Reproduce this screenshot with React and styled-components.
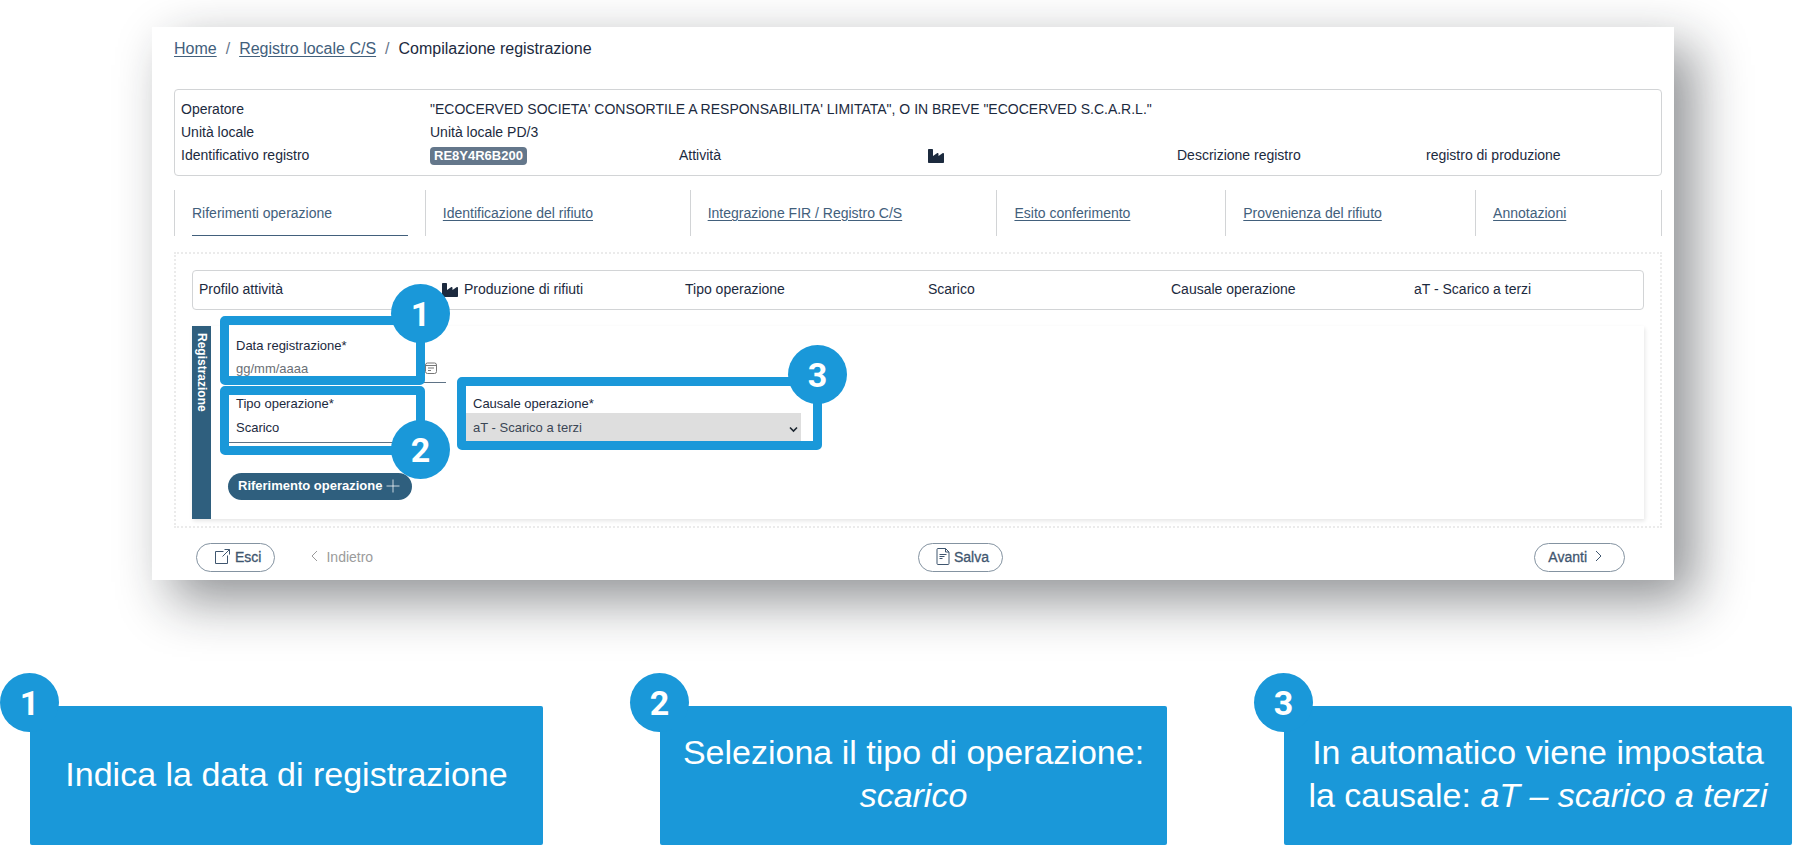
import React from "react";
import styled, { createGlobalStyle, css } from "styled-components";
import { FaIndustry } from "react-icons/fa";

const ink = "#1c2a3e";
const link = "#42607c";
const petrol = "#2f5f7e";
const accent = "#1a98d9";
const line = "#d2d4d6";

const GlobalStyle = createGlobalStyle`
  *, *::before, *::after { box-sizing: border-box; }
  body {
    margin: 0;
    background: #fff;
    color: ${ink};
    font-family: "Liberation Sans", Arial, Helvetica, sans-serif;
    font-size: 14px;
  }
  button, input, select { font: inherit; color: inherit; }
`;

const Page = styled.div`
  padding: 27px 0 19px;
  overflow-x: hidden;
`;

const Card = styled.main`
  margin: 0 136px 0 152px;
  padding: 12px 12px 8px 22px;
  background: #fff;
  box-shadow: 20px 20px 50px rgba(20, 25, 32, 0.48);
`;

const Breadcrumb = styled.nav`
  display: flex;
  gap: 9px;
  font-size: 16px;
  line-height: 20px;
  a { color: ${link}; text-underline-offset: 2px; }
`;

const Slash = styled.span`
  color: #66758a;
`;

const SummaryBox = styled.section`
  display: grid;
  grid-template-columns: ${(p) => p.$columns};
  line-height: 23px;
  margin-top: ${(p) => p.$gap};
  padding: ${(p) => p.$pad};
  border: 1px solid ${line};
  border-radius: 4px;
`;

const Cell = styled.div`
  display: flex;
  align-items: center;
  gap: 6px;
  min-width: 0;
  white-space: nowrap;
  grid-column: ${(p) => (p.$wide ? "span 5" : "auto")};
  svg { width: 16px; height: 16px; }
`;

const RegistryBadge = styled.span`
  padding: 0 4px;
  border-radius: 4px;
  background: #64778b;
  color: #fff;
  font-size: 13px;
  font-weight: 700;
  line-height: 18px;
`;

const Tabs = styled.nav`
  display: grid;
  grid-template-columns: 251fr 265fr 307fr 229fr 250fr 186fr;
  margin-top: 14px;
  border-right: 1px solid ${line};
`;

const TabSlot = styled.div`
  padding: 0 17px;
  border-left: 1px solid ${line};
  white-space: nowrap;
`;

const TabLink = styled.a`
  display: block;
  line-height: 46px;
  color: ${link};
  text-underline-offset: 2px;
  ${(p) =>
    p.$active &&
    css`
      text-decoration: none;
      box-shadow: inset 0 -1px ${link};
    `}
`;

const Section = styled.section`
  margin-top: 16px;
  padding: 16px 16px 7px;
  border: 2px dotted #ebebeb;
`;

const Panel = styled.form`
  display: flex;
  margin-top: 16px;
  box-shadow: 1px 2px 4px rgba(0, 0, 0, 0.1);
`;

const PanelTitle = styled.h2`
  width: 19px;
  margin: 0;
  padding-top: 7px;
  background: ${petrol};
  color: #fff;
  font-size: 12px;
  line-height: 19px;
  writing-mode: vertical-rl;
`;

const PanelBody = styled.div`
  position: relative;
  flex: 1;
  padding: 11px 17px 19px;
`;

const FieldRow = styled.div`
  display: flex;
  gap: 19px;
  margin-bottom: ${(p) => p.$after};
`;

const Field = styled.div`
  position: relative;
  width: ${(p) => p.$width};
  font-size: 13px;
  label {
    display: block;
    padding-left: 8px;
    line-height: 18px;
  }
`;

const control = css`
  display: block;
  width: 100%;
  margin: 0;
  padding: 0 8px;
  border: 0;
  border-bottom: 1px solid #5f7386;
  border-radius: 0;
  outline: 0;
  appearance: none;
`;

const DateInput = styled.input`
  ${control}
  height: 28px;
  background: transparent;
  &::placeholder { color: #6a6f76; opacity: 1; }
`;

const Select = styled.select`
  ${control}
  height: 30px;
  background: ${(p) => (p.disabled ? "#dedede" : "transparent")};
  &:disabled { color: #3b4655; opacity: 1; }
`;

const FieldIcon = styled.span`
  position: absolute;
  right: ${(p) => p.$right};
  bottom: ${(p) => p.$bottom};
  display: flex;
  pointer-events: none;
`;

const AddButton = styled.button`
  display: flex;
  align-items: center;
  gap: 4px;
  height: 27px;
  padding: 0 12px 2px 10px;
  border: 0;
  border-radius: 14px;
  background: ${petrol};
  color: #fff;
  font-size: 13px;
  font-weight: 700;
`;

const Marker = styled.span`
  position: absolute;
  display: flex;
  align-items: center;
  justify-content: center;
  width: 59px;
  height: 59px;
  border-radius: 50%;
  background: ${accent};
  color: #fff;
  font-family: Roboto, "Liberation Sans", sans-serif;
  font-size: 34px;
  font-weight: 700;
  line-height: 1;
  left: ${(p) => p.$left};
  top: ${(p) => p.$top};
`;

const Highlight = styled.div`
  position: absolute;
  left: ${(p) => p.$left};
  top: ${(p) => p.$top};
  width: ${(p) => p.$width};
  height: ${(p) => p.$height};
  border: 9px solid ${accent};
  border-radius: 5px;
  pointer-events: none;
`;

const Actions = styled.footer`
  display: grid;
  grid-template-columns: 1fr 1fr;
  margin-top: 15px;
`;

const ActionGroup = styled.div`
  display: flex;
  align-items: center;
  justify-content: ${(p) => (p.$spread ? "space-between" : "flex-start")};
  gap: 23px;
  padding: ${(p) => (p.$spread ? "0 37px 0 0" : "0 0 0 22px")};
`;

const ActionButton = styled.button`
  display: flex;
  align-items: center;
  gap: ${(p) => p.$gap || "4px"};
  height: 29px;
  padding: ${(p) => p.$pad || "0 13px 2px 17px"};
  border: 1px solid ${(p) => (p.disabled ? "transparent" : "#8493a1")};
  border-radius: 15px;
  background: transparent;
  color: ${(p) => (p.disabled ? "#9b9b9b" : "#3f566f")};
  -webkit-text-stroke: ${(p) => (p.disabled ? "0" : "0.3px")};
`;

const Legend = styled.ol`
  display: grid;
  grid-template-columns: 513fr 507fr 508fr;
  gap: 117px;
  margin: 126px 0 0;
  padding: 0 18px 0 30px;
  list-style: none;
`;

const LegendItem = styled.li`
  position: relative;
  display: flex;
  align-items: center;
  justify-content: center;
  min-height: 139px;
  padding: 0 16px 3px;
  border-radius: 2px;
  background: ${accent};
  color: #fff;
  font-size: 34px;
  line-height: 43px;
  text-align: center;
  p { margin: 0; }
`;

const TextLine = styled.span`
  display: block;
`;

const stroke = {
  fill: "none",
  stroke: "currentColor",
  strokeWidth: 1,
  "aria-hidden": true,
};

const ExitIcon = () => (
  <svg width="17" height="17" viewBox="0 0 17 17" {...stroke}>
    <path d="M9.5 3.5h-8v12h12v-8M8.5 8.5l7-7M10.5 1.5h5v5" />
  </svg>
);

const DocumentIcon = () => (
  <svg width="14" height="19" viewBox="0 0 14 19" {...stroke}>
    <path d="M2 1.5h7.500l3.500 3.500v11.500a1 1 0 0 1-1 1H2a1 1 0 0 1-1-1v-14a1 1 0 0 1 1-1zM9.500 1.500v3.500h3.500M3.500 7.500h7M3.500 9.500h5M3.500 11.500h3" />
  </svg>
);

const Chevron = ({ left }) => (
  <svg width="7" height="14" viewBox="0 0 7 14" {...stroke}>
    <path d={left ? "M6 1L1 6l5 5" : "M1 1l5 5-5 5"} />
  </svg>
);

const PlusIcon = () => (
  <svg width="14" height="14" viewBox="0 0 14 14" {...stroke}>
    <path d="M7 0.500v13M0.500 7h13" opacity="0.75" />
  </svg>
);

const CalendarIcon = () => (
  <svg width="12" height="12" viewBox="0 0 12 12" {...stroke}>
    <rect x="0.500" y="1" width="11" height="10.500" rx="2" stroke="#777" />
    <path d="M0.500 3.500h11M3 6h6M3 8.500h3" stroke="#777" />
  </svg>
);

const CaretIcon = () => (
  <svg width="9" height="7" viewBox="0 0 9 7" {...stroke}>
    <path d="M1 1.500l3.500 3.500L8 1.500" stroke="#1d2731" strokeWidth="1.600" />
  </svg>
);

const tabs = [
  "Riferimenti operazione",
  "Identificazione del rifiuto",
  "Integrazione FIR / Registro C/S",
  "Esito conferimento",
  "Provenienza del rifiuto",
  "Annotazioni",
];

export default function App() {
  return (
    <Page>
      <GlobalStyle />
      <Card>
        <Breadcrumb aria-label="Percorso">
          <a href="#home">Home</a>
          <Slash>/</Slash>
          <a href="#registro">Registro locale C/S</a>
          <Slash>/</Slash>
          <span>Compilazione registrazione</span>
        </Breadcrumb>

        <SummaryBox $columns="repeat(5, 249fr) 235fr" $gap="30px" $pad="8px 0 8px 6px">
          <Cell>Operatore</Cell>
          <Cell $wide>
            "ECOCERVED SOCIETA' CONSORTILE A RESPONSABILITA' LIMITATA", O IN BREVE "ECOCERVED S.C.A.R.L."
          </Cell>
          <Cell>Unità locale</Cell>
          <Cell $wide>Unità locale PD/3</Cell>
          <Cell>Identificativo registro</Cell>
          <Cell>
            <RegistryBadge>RE8Y4R6B200</RegistryBadge>
          </Cell>
          <Cell>Attività</Cell>
          <Cell>
            <FaIndustry />
          </Cell>
          <Cell>Descrizione registro</Cell>
          <Cell>registro di produzione</Cell>
        </SummaryBox>

        <Tabs aria-label="Sezioni">
          {tabs.map((name, i) => (
            <TabSlot key={name}>
              <TabLink href={`#sezione-${i + 1}`} $active={i === 0}>
                {name}
              </TabLink>
            </TabSlot>
          ))}
        </Tabs>

        <Section>
          <SummaryBox $columns="repeat(5, 243fr) 229fr" $gap="0" $pad="7px 0 8px 6px">
            <Cell>Profilo attività</Cell>
            <Cell>
              <FaIndustry />
              Produzione di rifiuti
            </Cell>
            <Cell>Tipo operazione</Cell>
            <Cell>Scarico</Cell>
            <Cell>Causale operazione</Cell>
            <Cell>aT - Scarico a terzi</Cell>
          </SummaryBox>

          <Panel>
            <PanelTitle>Registrazione</PanelTitle>
            <PanelBody>
              <FieldRow $after="12px">
                <Field $width="218px">
                  <label htmlFor="data">Data registrazione*</label>
                  <DateInput id="data" type="text" placeholder="gg/mm/aaaa" />
                  <FieldIcon $right="9px" $bottom="9px">
                    <CalendarIcon />
                  </FieldIcon>
                </Field>
              </FieldRow>
              <FieldRow $after="30px">
                <Field $width="218px">
                  <label htmlFor="tipo">Tipo operazione*</label>
                  <Select id="tipo" defaultValue="scarico">
                    <option value="scarico">Scarico</option>
                  </Select>
                </Field>
                <Field $width="336px">
                  <label htmlFor="causale">Causale operazione*</label>
                  <Select id="causale" defaultValue="aT" disabled>
                    <option value="aT">aT - Scarico a terzi</option>
                  </Select>
                  <FieldIcon $right="3px" $bottom="10px">
                    <CaretIcon />
                  </FieldIcon>
                </Field>
              </FieldRow>
              <AddButton type="button">
                Riferimento operazione
                <PlusIcon />
              </AddButton>

              <Highlight $left="9px" $top="-10px" $width="205px" $height="69px" />
              <Highlight $left="9px" $top="60px" $width="205px" $height="69px" />
              <Highlight $left="246px" $top="51px" $width="365px" $height="73px" />
              <Marker $left="180px" $top="-42px">1</Marker>
              <Marker $left="180px" $top="94px">2</Marker>
              <Marker $left="577px" $top="19px">3</Marker>
            </PanelBody>
          </Panel>
        </Section>

        <Actions>
          <ActionGroup>
            <ActionButton type="button">
              <ExitIcon />
              Esci
            </ActionButton>
            <ActionButton type="button" disabled $gap="8px" $pad="0 12px 2px">
              <Chevron left />
              Indietro
            </ActionButton>
          </ActionGroup>
          <ActionGroup $spread>
            <ActionButton type="button">
              <DocumentIcon />
              Salva
            </ActionButton>
            <ActionButton type="button" $gap="8px" $pad="0 22px 2px 13px">
              Avanti
              <Chevron />
            </ActionButton>
          </ActionGroup>
        </Actions>
      </Card>

      <Legend>
        <LegendItem>
          <Marker $left="-30px" $top="-33px">1</Marker>
          <p>Indica la data di registrazione</p>
        </LegendItem>
        <LegendItem>
          <Marker $left="-30px" $top="-33px">2</Marker>
          <p>
            <TextLine>Seleziona il tipo di operazione:</TextLine>
            <TextLine as="em">scarico</TextLine>
          </p>
        </LegendItem>
        <LegendItem>
          <Marker $left="-30px" $top="-33px">3</Marker>
          <p>
            <TextLine>In automatico viene impostata</TextLine>
            <TextLine>
              la causale: <em>aT – scarico a terzi</em>
            </TextLine>
          </p>
        </LegendItem>
      </Legend>
    </Page>
  );
}
